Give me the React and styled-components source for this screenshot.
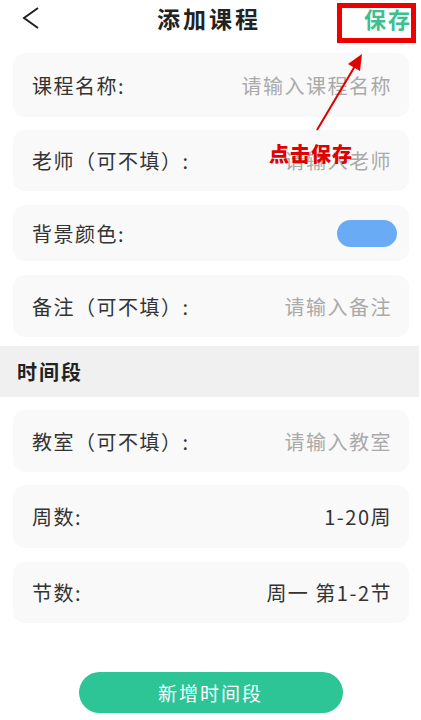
import React from "react"
import styled, { createGlobalStyle } from 'styled-components'

const GlobalStyle = createGlobalStyle`
body {
  margin: 0;
  background: #ffffff;
  font-family: "Noto Sans CJK SC", "Noto Sans", sans-serif;
}
`

const Page = styled.div`
position: relative;
width: 421px;
height: 720px;
overflow: hidden;
background: #fff;
`
const Header = styled.div`
display: flex;
align-items: center;
justify-content: space-between;
height: 36px;
padding: 0 11px 0 22px;
margin-bottom: 17px;
`
const Title = styled.h1`
margin: 0 0 0 14px;
font-size: 23px;
font-weight: 700;
letter-spacing: 3px;
color: #222;
`
const SaveText = styled.span`
font-size: 22px;
font-weight: 700;
letter-spacing: 2px;
color: #3dbf8e;
margin-right: -2px;
`
const Card = styled.div`
display: flex;
align-items: center;
justify-content: space-between;
height: ${p => p.h || 62}px;
margin: 0 12px ${p => p.mb || 13}px 13px;
padding: 0 17px 0 19px;
background: #f9f9f9;
border-radius: 12px;
font-size: 20px;
letter-spacing: 1.5px;
`
const Label = styled.span`
color: #333;
`
const Value = styled.span`
color: ${p => p.placeholder ? '#aaaaaa' : '#333'};
`
const Toggle = styled.div`
width: 60px;
height: 27px;
border-radius: 14px;
background: #6aabf5;
margin-right: -5px;
`
const Section = styled.div`
display: flex;
align-items: center;
height: 51px;
margin: -4px 2px 13px 0;
padding-left: 17px;
background: #f0f0f0;
font-size: 20px;
font-weight: 700;
letter-spacing: 2px;
color: #222;
`
const Footer = styled.div`
display: flex;
justify-content: center;
margin-top: 49px;
`
const AddButton = styled.button`
width: 264px;
height: 41px;
border: none;
border-radius: 21px;
background: #2ec596;
color: #fff;
font-family: inherit;
font-size: 19px;
letter-spacing: 2px;
`
const Highlight = styled.div`
position: absolute;
left: 337px;
top: 3px;
width: 79px;
height: 40px;
box-sizing: border-box;
border: 5px solid #ee0000;
`
const Callout = styled.span`
position: absolute;
left: 269px;
top: 139px;
font-size: 20px;
font-weight: 900;
color: #e00000;
letter-spacing: 1px;
`
const Arrow = styled.svg`
position: absolute;
left: 0;
top: 0;
`

const rows = [
  { label: '课程名称:', value: '请输入课程名称', placeholder: true, h: 64 },
  { label: '老师（可不填）:', value: '请输入老师', placeholder: true, h: 61, mb: 14 },
]

export default function App() {
  return (
    <Page>
      <GlobalStyle />
      <Header>
        <svg width="18" height="22" viewBox="0 0 18 22">
          <path d="M16 1 L2 11 L16 21" fill="none" stroke="#222" strokeWidth="2" />
        </svg>
        <Title>添加课程</Title>
        <SaveText>保存</SaveText>
      </Header>
      {rows.map(r => (
        <Card key={r.label} h={r.h} mb={r.mb}>
          <Label>{r.label}</Label>
          <Value placeholder={r.placeholder}>{r.value}</Value>
        </Card>
      ))}
      <Card h={56} mb={14}>
        <Label>背景颜色:</Label>
        <Toggle />
      </Card>
      <Card h={62} mb={13}>
        <Label>备注（可不填）:</Label>
        <Value placeholder>请输入备注</Value>
      </Card>
      <Section>时间段</Section>
      <Card h={62}>
        <Label>教室（可不填）:</Label>
        <Value placeholder>请输入教室</Value>
      </Card>
      <Card h={63} mb={14}>
        <Label>周数:</Label>
        <Value>1-20周</Value>
      </Card>
      <Card h={61}>
        <Label>节数:</Label>
        <Value>周一 第1-2节</Value>
      </Card>
      <Footer>
        <AddButton>新增时间段</AddButton>
      </Footer>
      <Highlight />
      <Arrow width="421" height="200">
        <line x1="317" y1="130" x2="355" y2="66" stroke="#e00000" strokeWidth="2" />
        <polygon points="362,54 348,64 360,71" fill="#e00000" />
      </Arrow>
      <Callout>点击保存</Callout>
    </Page>
  )
}
